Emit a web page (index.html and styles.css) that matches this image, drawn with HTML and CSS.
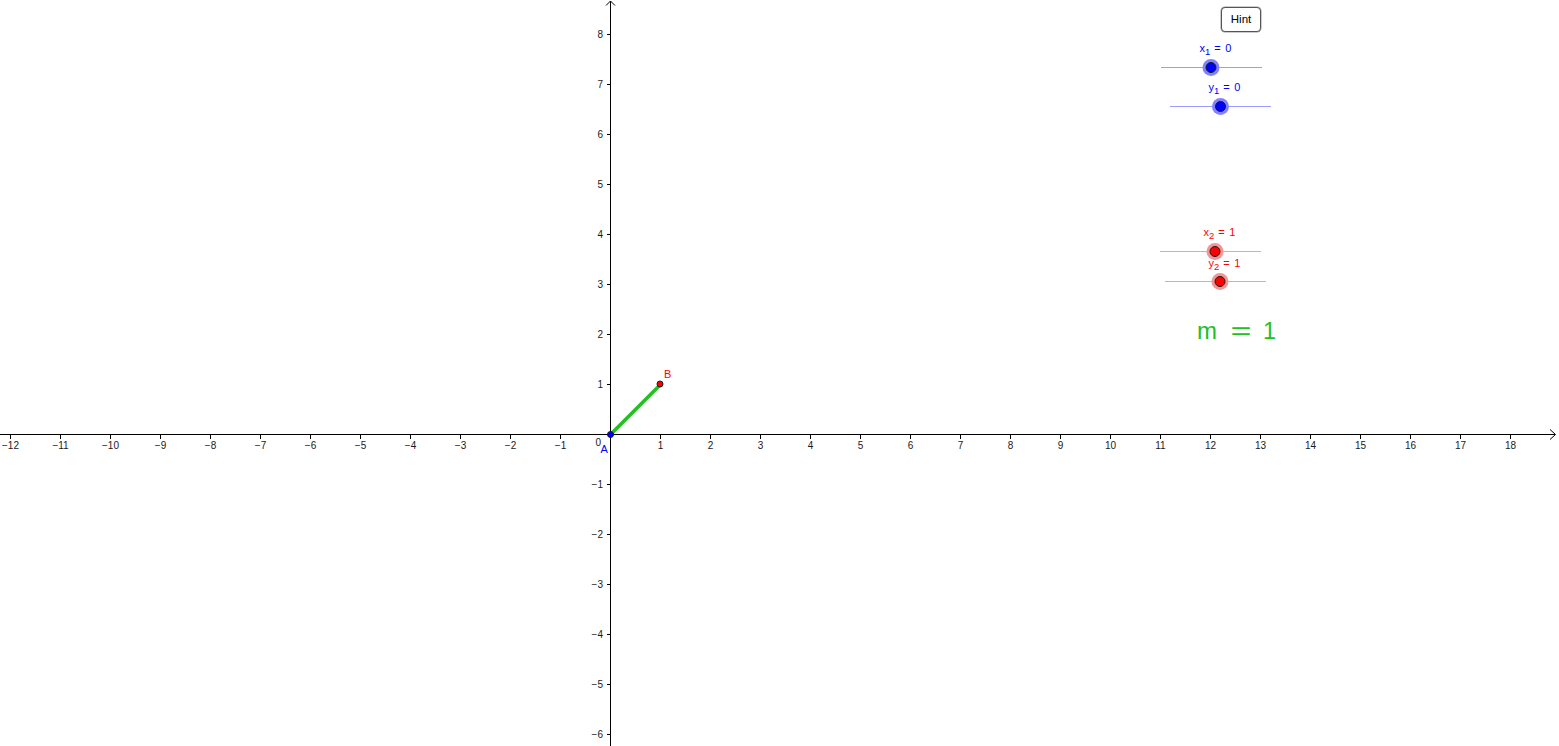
FILE: index.html
```html
<!DOCTYPE html>
<html lang="en">
<head>
<meta charset="utf-8">
<title>GeoGebra – slope</title>
<link rel="stylesheet" href="styles.css">
</head>
<body>
<div class="applet">
  <svg class="graph" width="1559" height="746" viewBox="0 0 1559 746" xmlns="http://www.w3.org/2000/svg">
    <!-- axes -->
    <line class="axis" x1="0" y1="434.5" x2="1555" y2="434.5"/>
    <polyline class="arrow" points="1550,429.5 1555.5,434.5 1550,439.5"/>
    <line class="axis" x1="610.5" y1="1" x2="610.5" y2="746"/>
    <polyline class="arrow" points="606,5.5 610.5,1 615,5.5"/>

    <!-- ticks -->
    <path class="tick" d="M10.5 434.5v4M60.5 434.5v4M110.5 434.5v4M160.5 434.5v4M210.5 434.5v4M260.5 434.5v4M310.5 434.5v4M360.5 434.5v4M410.5 434.5v4M460.5 434.5v4M510.5 434.5v4M560.5 434.5v4M660.5 434.5v4M710.5 434.5v4M760.5 434.5v4M810.5 434.5v4M860.5 434.5v4M910.5 434.5v4M960.5 434.5v4M1010.5 434.5v4M1060.5 434.5v4M1110.5 434.5v4M1160.5 434.5v4M1210.5 434.5v4M1260.5 434.5v4M1310.5 434.5v4M1360.5 434.5v4M1410.5 434.5v4M1460.5 434.5v4M1510.5 434.5v4"/>
    <path class="tick" d="M606.5 34.5h4M606.5 84.5h4M606.5 134.5h4M606.5 184.5h4M606.5 234.5h4M606.5 284.5h4M606.5 334.5h4M606.5 384.5h4M606.5 484.5h4M606.5 534.5h4M606.5 584.5h4M606.5 634.5h4M606.5 684.5h4M606.5 734.5h4"/>

    <!-- x labels -->
    <g class="xlabels">
      <text x="10.5" y="448.5">−12</text>
      <text x="60.5" y="448.5">−11</text>
      <text x="110.5" y="448.5">−10</text>
      <text x="160.5" y="448.5">−9</text>
      <text x="210.5" y="448.5">−8</text>
      <text x="260.5" y="448.5">−7</text>
      <text x="310.5" y="448.5">−6</text>
      <text x="360.5" y="448.5">−5</text>
      <text x="410.5" y="448.5">−4</text>
      <text x="460.5" y="448.5">−3</text>
      <text x="510.5" y="448.5">−2</text>
      <text x="560.5" y="448.5">−1</text>
      <text x="660.5" y="448.5">1</text>
      <text x="710.5" y="448.5">2</text>
      <text x="760.5" y="448.5">3</text>
      <text x="810.5" y="448.5">4</text>
      <text x="860.5" y="448.5">5</text>
      <text x="910.5" y="448.5">6</text>
      <text x="960.5" y="448.5">7</text>
      <text x="1010.5" y="448.5">8</text>
      <text x="1060.5" y="448.5">9</text>
      <text x="1110.5" y="448.5">10</text>
      <text x="1160.5" y="448.5">11</text>
      <text x="1210.5" y="448.5">12</text>
      <text x="1260.5" y="448.5">13</text>
      <text x="1310.5" y="448.5">14</text>
      <text x="1360.5" y="448.5">15</text>
      <text x="1410.5" y="448.5">16</text>
      <text x="1460.5" y="448.5">17</text>
      <text x="1510.5" y="448.5">18</text>
    </g>

    <!-- y labels -->
    <g class="ylabels">
      <text x="603" y="38">8</text>
      <text x="603" y="88">7</text>
      <text x="603" y="138">6</text>
      <text x="603" y="188">5</text>
      <text x="603" y="238">4</text>
      <text x="603" y="288">3</text>
      <text x="603" y="338">2</text>
      <text x="603" y="388">1</text>
      <text x="603" y="488">−1</text>
      <text x="603" y="538">−2</text>
      <text x="603" y="588">−3</text>
      <text x="603" y="638">−4</text>
      <text x="603" y="688">−5</text>
      <text x="603" y="738">−6</text>
      <text x="601" y="446">0</text>
    </g>

    <!-- segment AB -->
    <line class="segment" x1="610.5" y1="434.5" x2="660.5" y2="384.5"/>
    <circle class="pt pt-blue" cx="610.5" cy="434.5" r="3"/>
    <circle class="pt pt-red" cx="660" cy="384" r="3"/>
    <text class="ptlabel lbl-blue" x="600.5" y="453">A</text>
    <text class="ptlabel lbl-red" x="664" y="378">B</text>

    <!-- sliders: blue -->
    <line class="track track-blue" x1="1161" y1="67.5" x2="1262" y2="67.5"/>
    <circle class="halo halo-blue" cx="1211" cy="67.5" r="8.5"/>
    <circle class="knob pt-blue" cx="1211" cy="67.5" r="5"/>

    <line class="track track-blue" x1="1170" y1="106.5" x2="1271" y2="106.5"/>
    <circle class="halo halo-blue" cx="1220.5" cy="106.5" r="8.5"/>
    <circle class="knob pt-blue" cx="1220.5" cy="106.5" r="5"/>

    <!-- sliders: red -->
    <line class="track track-red" x1="1160" y1="251.5" x2="1261" y2="251.5"/>
    <circle class="halo halo-red" cx="1215" cy="251.5" r="8.5"/>
    <circle class="knob pt-red" cx="1215" cy="251.5" r="5"/>

    <line class="track track-red" x1="1165" y1="281.5" x2="1266" y2="281.5"/>
    <circle class="halo halo-red" cx="1220" cy="281.5" r="8.5"/>
    <circle class="knob pt-red" cx="1220" cy="281.5" r="5"/>

    <!-- slider labels -->
    <text class="slabel lbl-blue" x="1199.5" y="51.5">x<tspan class="sub" dy="3">1</tspan><tspan dy="-3" dx="1"> = </tspan><tspan dx="1.5">0</tspan></text>
    <text class="slabel lbl-blue" x="1208.5" y="91">y<tspan class="sub" dy="3">1</tspan><tspan dy="-3" dx="1"> = </tspan><tspan dx="1.5">0</tspan></text>
    <text class="slabel lbl-red" x="1203.5" y="236">x<tspan class="sub" dy="3">2</tspan><tspan dy="-3" dx="1"> = </tspan><tspan dx="1.5">1</tspan></text>
    <text class="slabel lbl-red" x="1208.5" y="266.5">y<tspan class="sub" dy="3">2</tspan><tspan dy="-3" dx="1"> = </tspan><tspan dx="1.5">1</tspan></text>

    <!-- slope text -->
    <text class="slope" x="1197" y="339">m</text>
    <text class="slope" x="1230.5" y="339" textLength="21" lengthAdjust="spacingAndGlyphs">=</text>
    <text class="slope" x="1263" y="339" textLength="13" lengthAdjust="spacingAndGlyphs">1</text>
  </svg>
  <button class="hint" type="button">Hint</button>
</div>
</body>
</html>
```

FILE: styles.css
```css
html, body {
  margin: 0;
  padding: 0;
  background: #ffffff;
  overflow: hidden;
}

.applet {
  position: relative;
  width: 1559px;
  height: 746px;
  background: #ffffff;
  font-family: "Liberation Sans", Arial, sans-serif;
}

.graph {
  display: block;
}

.axis {
  stroke: #000000;
  stroke-width: 1;
  shape-rendering: crispEdges;
}

.arrow {
  fill: none;
  stroke: #000000;
  stroke-width: 1;
}

.tick {
  stroke: #000000;
  stroke-width: 1;
  fill: none;
  shape-rendering: crispEdges;
}

.xlabels text,
.ylabels text {
  font-family: "Liberation Sans", Arial, sans-serif;
  font-size: 10px;
  fill: #1a1a1a;
}

.xlabels text {
  text-anchor: middle;
}

.ylabels text {
  text-anchor: end;
}

.segment {
  stroke: #22c022;
  stroke-width: 3.6;
  stroke-linecap: butt;
}

.pt {
  stroke: #1a1a1a;
  stroke-width: 1;
}

.pt-blue {
  fill: #0000ff;
}

.pt-red {
  fill: #ff0000;
}

.knob {
  stroke: #1a1a1a;
  stroke-width: 1;
}

.track {
  stroke-width: 1;
  shape-rendering: crispEdges;
}

.track-blue {
  stroke: #9a9aff;
}

.track-red {
  stroke: #f2a0a0;
}

.halo-blue {
  fill: #8282ff;
}

.halo-red {
  fill: #f49494;
}

.ptlabel {
  font-family: "Liberation Sans", Arial, sans-serif;
  font-size: 11px;
}

.slabel {
  font-family: "Liberation Sans", Arial, sans-serif;
  font-size: 11px;
  white-space: pre;
}

.slabel .sub {
  font-size: 9.5px;
}

.lbl-blue {
  fill: #0000ff;
}

.lbl-red {
  fill: #ff0000;
}

.slope {
  font-family: "Liberation Sans", Arial, sans-serif;
  font-size: 24px;
  fill: #22c022;
}

.hint {
  position: absolute;
  left: 1221px;
  top: 7px;
  width: 40px;
  height: 25px;
  margin: 0;
  padding: 0;
  box-sizing: border-box;
  border: 1px solid #555555;
  border-radius: 4px;
  background: #ffffff;
  box-shadow: 0 0 0 0.5px #999999;
  font-family: "Liberation Sans", Arial, sans-serif;
  font-size: 11.5px;
  color: #000000;
  line-height: 23px;
  text-align: center;
  cursor: pointer;
}
```
